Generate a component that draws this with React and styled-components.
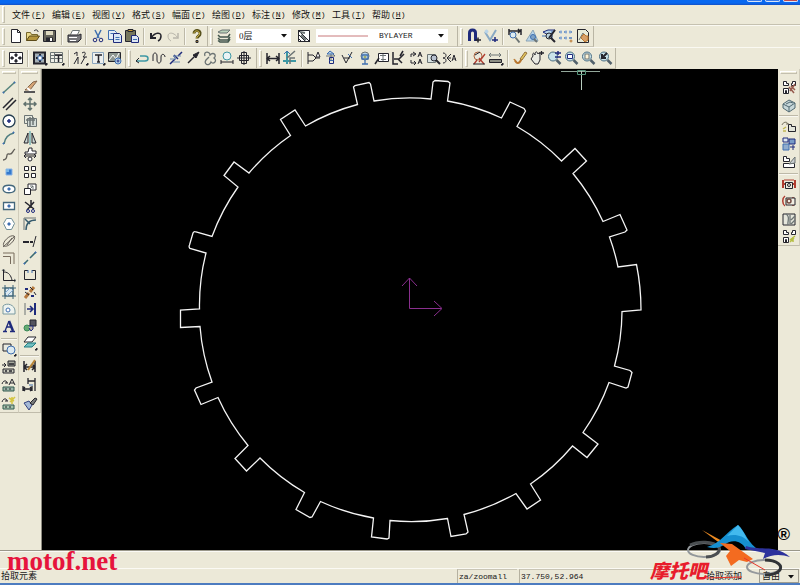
import React from "react";
import styled, { createGlobalStyle } from "styled-components";

const Global = createGlobalStyle`
  * { box-sizing: border-box; }
  body { margin: 0; background: #ece9d8; font-family: "Liberation Sans", "Noto Sans CJK SC", sans-serif; }
`;

const cjk = `"Noto Sans CJK SC", sans-serif`;
const mono = `"Liberation Mono", "Noto Sans CJK SC", monospace`;
const serif = `"Liberation Serif", "Noto Sans CJK SC", serif`;

/* Each icon is a list of [path, stroke, fill, stroke width] on a 16 x 16 grid. */
const K = "#25252d";
const G = "#6c7474";
const B = "#3f6fb0";
const N = "#1e2a7c";
const T = "#3e98a4";
const R = "#b03c30";
const Y = "#c79a35";
const O = "#b8762e";
const L = "#b9d5ea";
const W = "#ffffff";
const circle = (x, y, r) => `M${x - r} ${y}a${r} ${r} 0 1 0 ${2 * r} 0a${r} ${r} 0 1 0 ${-2 * r} 0`;
const box = (x, y, w, h) => `M${x} ${y}h${w}v${h}h${-w}z`;
const lens = [[circle(7, 6.5, 4.5), "#4a6c80", "#c9e3ea"], ["M10.5 10l4 4", "#52616c", "none", 2.5]];
const fourBoxes = [
  [box(2.5, 2.5, 4, 4), K, W], [box(9.5, 2.5, 4, 4), K, W],
  [box(2.5, 9.5, 4, 4), K, W], [box(9.5, 9.5, 4, 4), K, W],
];
const parts = [
  ["M2.5 6.5v-4h3v2h2v2zM10.5 6.5v-2h1v-2h3v4z", K, W],
  [box(2.5, 9.5, 5, 5), K, W], [box(4.5, 11.5, 1, 3), K],
];

const icons = {
  新建: [["M3.5 1.5h6l3 3v10h-9z", K, W], ["M9.5 1.5v3h3", K]],
  打开: [["M1.5 12.5v-8h4l1 2h6v2", "#77672b", "#ead98a"], ["M1.5 12.5l3-4.5h10l-3 4.5z", "#5b4a18", "#b5973e"], ["M9 3c2-2 4-1 4 1", K]],
  保存: [[box(1.5, 2.5, 12, 11), K, "#65645a"], [box(4, 3, 7, 4), "none", "#ded9c0"], [box(4, 9.5, 7, 4), "none", K], [box(8, 10, 2, 3), "none", W]],
  打印: [["M4.5 6.5l2-4h7l-2 4", G, W], ["M2 7h11l2-1v5l-3 3H2z", K, "#77777a"], ["M3 9.5h8M4 12.5h6", W]],
  剪切: [["M5 2l4 8M11 2L7 10", B, "none", 1.5], [circle(5, 12, 1.8) + circle(11, 12, 1.8), N]],
  复制: [["M1.5 2.5h6l2 2v7h-8z", B, "#e5edf5"], ["M6.5 5.5h6l2 2v7h-8z", N, "#dae6f4"], ["M8.5 9.5h4M8.5 11.5h4M3.5 5.5h3", B]],
  粘贴: [[box(1.5, 2.5, 10, 11), K, "#77775d"], [box(4, 1.5, 5, 2), K, Y], ["M7.5 7.5h5l2 2v5h-7z", N, "#dde6f2"], ["M9 11.5h4", B]],
  撤销: [["M3 5v5h5", K, "none", 2], ["M3.5 9.5C7 4 13 4 13 8c0 2-1 4-3 5", K, "none", 1.5]],
  重做: [["M13 5v5H8", "#b8b5aa", "none", 1.5], ["M12.5 9.5C9 4 3 4 3 8c0 2 1 4 3 5", "#b8b5aa"]],
  帮助: [["M5 5.5C5 1 12 2 11 6c0 2-3 2-3 4.5", "#57511c", "none", 3], ["M5 5.5C5 2 11 2 10.5 6c0 2-3 2-3 4.5", "#cdb54b"], [box(7, 12.5, 2, 2), K, Y]],
  图层: [["M2 4l4-2h8l-3 3H4z", G, "#b9d2b9"], ["M2 7l2 2h8l2-3M2 10l2 2h8l2-3M2 12.5l2 1.5h8l2-3", "#43564d", "none", 1.5]],
  线型: [[box(2.5, 2.5, 11, 11), K, W], ["M2 2l12 12M2 6l8 8M2 10l4 4", K], ["M4 4l5 1M5 7l5 5", G, "none", 2]],
  捕捉: [["M3.5 13V5c0-4 6-4 6 0v8", N, "none", 3], ["M9 12h6M12 9.5v5", K, "none", 1.5]],
  导航: [["M2 4l5 8 6-10", "#89a9c4", "none", 2], [circle(3.5, 3.5, 1.5), L, L], ["M9 12h6M12 9v5", N, "none", 1.5]],
  查距离: [["M2 1v6M2 3h11M14 1v6M11 1l2 2-2 2", K, "none", 1.5], [circle(6, 7, 3), B, "#dceaf0"], ["M8.5 9.5l4 5", G, "none", 2]],
  查角度: [["M2 13L9 2l5 11z", "#8ba4b6", L], [circle(9, 9, 2.5), B, "#7fa3c6"], ["M10 11l3 3", G, "none", 2]],
  查元素: [["M2 4l5-2h7l-5 6z", N, L], ["M1 8h6M11 3v8", B], [circle(8, 8, 3), K, "#bcd3df"], ["M10 10l4 4M14 2l-6 8", K, "none", 2]],
  查坐标: [["M1 4h3M6 4h3M11 4h3M1 10h3M6 10h3M11 10h3", "#7598c4", "none", 2], ["M3 2v4M8 2v4M12 2v4M3 8v4M8 8v4", "#9fb9dc"], [circle(13, 13, 1), O]],
  查图: [["M2.5 1.5h8l3 3v10h-11z", K, "#e9ecd9"], ["M4 12l4-7 3 7", G], ["M7 8l2-2 2 2h2v4l-3 2-4-4z", O, "#d8a069"]],

  全图: [[box(1.5, 2.5, 13, 11), K, W], ["M8 4v3M6.5 5.5L8 4l1.5 1.5M8 12V9M6.5 10.5L8 12l1.5-1.5M3 8h3M4.5 6.5L3 8l1.5 1.5M13 8h-3M11.5 6.5L13 8l-1.5 1.5", K, "none", 1.5]],
  图框: [[box(2, 2.5, 11, 11), K, "#a4aeb4", 2], ["M8 4v2M8 10v2M4 8h2M10 8h2", K, "none", 2], [box(6, 6, 4, 4), B, W], ["M13 15h2v-2z", K, K]],
  标题: [[box(1.5, 2.5, 12, 10), G, "#f0f0e8"], ["M2 5.5h12M2 8.5h12M5.5 3v10", G], ["M6 5h7M9.5 5v7", K, "none", 1.5], ["M13 15h2v-2z", K, K]],
  标号: [["M1 4l3-2v4M9 3c3-2 5 0 1 4h4M1 14l4-7v7M8 14l4-7", K], ["M13 15h2v-2z", K, K]],
  文本框: [[box(2.5, 2.5, 11, 11), "#8ba6bf", "#edf0ef"], ["M5 5h7M8.5 5v7M7 12h3", K, "none", 1.5], ["M13 15h2v-2z", K, K]],
  图库: [[box(1.5, 2.5, 12, 9), K, "#8d9690"], ["M2 10l4-5 3 4 3-6", W], [circle(11, 11, 3), B, L], [circle(11, 11, 1), N]],
  箭尾: [["M2 11h9c4 0 4-5 0-5H6", T, "none", 1.5], ["M5 8L2 11l3 2", K]],
  波浪: [["M2 11V6c0-4 4-4 4 0v4c0 4 4 4 4 0V7c0-4 4-3 4 0", K]],
  双折: [["M2 14l5-5M6 5l4 4M10 6l4-4", N, "none", 1.5], ["M2 9h6l-3-3h8M5 12h7", "#6f8daf"]],
  箭头: [["M3 13l8-8", K, "none", 1.5], ["M8 5l6-3-3 6z", K, K]],
  云线: [["M3 6c-2-5 5-5 5-1 4-4 7 1 4 3 4 3-1 7-3 4-2 5-8 2-5-2l3-3", G, "none", 1.3]],
  孔轴: [[circle(8, 6, 4), T, "#eaf3f5"], ["M2 10v4M14 10v4M2 12h12", K]],
  齿轮: [[box(3.5, 5.5, 9, 5), K], ["M1 8h14M8 1v14", K], [box(5.5, 2.5, 5, 11), K]],
  尺寸: [["M2 3v11M14 3v11M2 8.5h12M5 6L2 8.5l3 2.5M11 6l3 2.5-3 2.5", K, "none", 1.5]],
  坐标: [["M5 1v13M1 11h13", T, "none", 2], ["M5 8l8-7M8 14V8h5", G, "none", 1.5], ["M2 4l3-3 3 3", B]],
  半径: [["M2 2v12M2 5h5l3 3-3 3H2M10 8h4", K], ["M10 7l2-5 2 5z", K, W]],
  倒角: [["M3 6h9L8 2v9", G], [box(6.5, 7.5, 4, 6), N], ["M6.5 10.5h4M4 4l3-3 4 3z", B, L]],
  粗糙度: [["M2 5l4 8 6-11M4 8h6", K], ["M8 4l4 4", B]],
  公差: [[circle(8, 6, 4), G, L], ["M5 5h6v4H5zM8 10v4M5 14h6", B, "none", 1.3], [circle(8, 7, 1), "#9eac63", "#9eac63"]],
  引出: [["M4.5 3.5h10v8h-10z", K, W], ["M6 5.5h6M7 9.5h5M9 4v7", G], ["M1 14l4-6", K, "none", 1.5]],
  基准: [["M2 2v12h5M3 9h5l5-5M12 1l-3 5M7 9l4 4", K, "none", 1.5]],
  焊接: [["M3 7V4h4M5 2l3 2-3 2M3 10v3h4M6 11l2 2-2 2", K], ["M10 7l2-5 2 5M11 5h2M10 14l2-5 2 5M11 12h2", K]],
  剖切: [[box(2.5, 4.5, 8, 8), G, "#dbe5e4"], [circle(9, 8, 3), K, "#b8c2d0"], ["M11 10l4 4", K, "none", 2]],
  局部: [["M1 3c4 0 4 5 0 5 4 0 4 5 0 5M5 8h4M9 4L5 8l4 4", K], ["M10 11l2-6 2 6M11 9h3", K]],
  编辑查: [[circle(7, 6, 4), "#ab6640", "#e9e9dc"], ["M3 14l3-4M8 8l5 6M8 12l6-8", R, "none", 1.3], ["M4 5l5-3M2 14h12", K]],
  测量: [["M2 5h10M3 3L1 5l2 2M11 3l2 2-2 2", G], [box(1.5, 9.5, 12, 3), K, "#8c8e84"], ["M13 15h2v-2z", K, K]],
  重画: [["M2 10c1-1 2 4 4 3 2 0 3-3 4-5", O, "none", 2], ["M8 9l5-7 2 1-5 7z", "#94713b", "#e0c45a"]],
  平移: [["M4 6c-1-3 1-4 2-1 0-4 2-4 3-1 1-2 2-1 2 2v4l-2 4H6L2 9z", K, "#e9eae2"], ["M10 3h5M12.5 1v4", K, "none", 1.3]],
  缩放: [...lens, ["M9 3h6M12 1v4M9 7h6", N, "none", 1.5]],
  窗口: [...lens, [box(4.5, 4.5, 5, 4), N, W]],
  全部: [...lens, [box(5, 4, 4, 5), G, "#fff4d6"]],
  回溯: [...lens, ["M10 3L5 8M5 4v4h4", K, "none", 2]],

  直线: [["M2 14L14 3", "#55837c", "none", 1.5], ["M2 14l1-1M13 4l1-1", B, "none", 2]],
  平行线: [["M2 12L12 2M5 14L15 4", K, "none", 1.5]],
  圆: [[circle(8, 8, 6), "#263f52", W, 1.3], ["M6 8h4M8 6v4", N, "none", 1.5]],
  圆弧: [["M3 14C4 7 8 4 13 3", "#4e7d80", "none", 1.5], [box(2, 13, 1, 1), B, B], [box(12, 2, 1, 1), B, B]],
  样条: [["M2 13c6 0 2-7 6-6s3-3 6-5", "#625f59", "none", 1.3]],
  点: [[box(5, 5, 6, 6), "#8ab4e8", "#3479cc"], [box(5, 5, 3, 3), "none", "#7ab5e7"]],
  椭圆: [["M2 8c0-5 12-5 12 0s-12 5-12 0", "#43677c", W, 1.3], [box(7, 7, 2, 2), B, B]],
  矩形: [[box(2.5, 4.5, 11, 7), "#43677c", W, 1.3], [box(7, 7, 2, 2), B, B]],
  多边形: [["M5.5 2.5h5l3 5-3 6h-5l-3-6z", "#6f8e98", W], [box(7, 7, 2, 2), B, B]],
  公式: [["M3 13C0 10 9 1 13 3c3 3-6 12-10 10zM2 14L14 3M6 12l5-7", "#655f58"]],
  折线: [["M2 3h11v11M2 6.5h7.5V14", "#786c5d"]],
  曲线: [["M2.5 2v11.5H15M3 5c5 0 7 4 8 8", K], ["M1 4l1.5-2L4 4M13 12l2 1.5-2 1.5", G]],
  剖面: [[box(4, 4, 8, 8), "#3c6377", "#dbe8ee"], ["M1 4h14M1 12h14M4 1v14M12 1v14", "#3c6377"], ["M4 9l5-5M6 12l6-6", "#7fa6cf"]],
  填充: [["M2 13V5c4-4 12-1 12 5v3z", "#7a9aa0", "#eef3ef"], [circle(7, 9, 2), B, W]],
  文字: [["M4 13L8 3M6 9h5M2 13.5h4M9 13.5h5", N, "none", 1.3], ["M8 3l4 10", N, "none", 2.5]],
  块: [[box(2, 3, 8, 7), K, "#e8eadf"], [circle(10, 9, 4), B, "#ddeaf0"], ["M13 15h2v-2z", K, K]],
  块编辑: [["M1 6h4M3 4l2 2-2 2", K], [box(7, 2, 7, 5), K, "#a6a99e"], [box(2, 10, 11, 4), K, "#c8c9bb"], ["M8 5h5M4 12h2M8 12h3", K, "none", 1.5]],
  属性: [["M1 7c1-4 5-4 5-1M4 6h3M8 8l3-6 3 6M9 6h4", K], [box(2, 10, 11, 4), "#31594f", "#9bb5a9"], ["M4 12h2M8 12h2", K]],
  插入: [["M1 7c1-4 5-4 5-1M4 6h3", K], ["M8 3l5 3M9 7l5-5M11 2v7", "#d5c541", "none", 1.5], [box(2, 10, 11, 4), "#31594f", "#a6c3ad"], ["M4 12h2M8 12h2", K]],
  擦除: [["M3 11l8-8 4-1-7 9z", "#83674d", "#d6a575"], ["M5 9l4 3", W, "none", 2], ["M2 13h11", K, "none", 1.5]],
  移动: [["M8 2v12M2 8h12M6 4l2-2 2 2M6 12l2 2 2-2M4 6L2 8l2 2M12 6l2 2-2 2", "#60716d", "none", 1.5]],
  阵移: [[box(2.5, 2.5, 8, 8), G, "#e6e8dd"], [box(5.5, 5.5, 9, 8), G, "#d4dcd8"], ["M4 7h9M8 4v9M11 4v8", G, "none", 1.5]],
  镜像: [["M6 3v10H2zM10 3v10h4z", K, "#cbd6d3"], ["M8 1v14", T]],
  旋转: [["M7 1h3v3h4v3H3V5h3z", K, W], ["M3 9h10M4 7L2 9l2 2M12 7l2 2-2 2", K], [circle(8, 12, 2), K, W]],
  阵列: fourBoxes,
  比例: [["M6 8V3h8v6H9", K, W], [box(2.5, 7.5, 6, 6), K, W], ["M8 8l3-3M8 5h3v3", G]],
  裁剪: [["M9 2v8M3 4l9 7M12 4l-7 8", K, "none", 1.5], [circle(6, 13, 1.5) + circle(11, 13, 1.5), N]],
  圆角: [["M2 2v12M2 2h12", G], ["M4 14C4 7 7 4 14 4M3 3l5 5", "#365b6d", "none", 1.5]],
  延伸: [["M1 9h6M8 9h3", K, "none", 2], ["M11 14l3-11", K]],
  打断: [["M2 14l4-4M8 8l6-6", "#3a6a71", "none", 1.5], [box(2, 13, 1, 1), B, B], [box(13, 2, 1, 1), B, B]],
  拉伸: [["M6 3.5H2.5v9h11v-9H10", K], ["M6 3v3M10 3v3", B]],
  打散: [["M3 14l4-5M8 8l4-5", "#b5793f", "none", 3], ["M8 3l3 3M3 8l4 3M12 8l2 3", K], ["M3 5h3M9 12h3", N, "none", 2]],
  对齐: [["M3 2v12", G], ["M13 2v12", N, "none", 2], ["M5 8h6M8 5l3 3-3 3", N, "none", 1.5]],
  格式刷: [[circle(5, 10, 3), "#3a8958", "#65ab73"], [box(8, 2, 6, 6), K, "#53545f"], ["M7 8h4v3l-2 2-2-3", N, "#bbb2a2"]],
  层叠: [["M2 7l4-5h8l-4 5z", K, W], ["M2 12l4-4h8l-4 4z", "#207f84", "#72bfc0"], ["M13 15h2v-2z", K, K]],
  尺寸改: [["M2 3v11M13 3v11M2 9h11M5 6L2 9l3 3M10 6l3 3-3 3", K, "none", 1.5], ["M6 12l7-10", "#b78438", "none", 2]],
  尺寸驱动: [["M6 1v6M13 1v6M6 4h7M1 9v5M10 9v5M1 12h9M3 10l-2 2 2 2M8 10l2 2-2 2M13 7v7", K, "none", 1.3], ["M7 8h4", B]],
  特性: [["M2 7l5-2 3 4-3 5z", "#33427e", "#a5b9d6"], ["M8 7l5-5 2 1-4 6z", K, "#77797a"]],

  提取图符: [...parts, ["M8 8l5 6M10 7l4 4M9 12l5-7", "#965a4d", "none", 1.5]],
  三维: [["M2 7l6-4 6 3v5l-6 4-6-4z", "#4f6871", "#c7d7d9"], ["M2 7l6 3 6-4M8 10v5M5 7l4-2 3 1", "#4f6871"]],
  定义图符: [["M1 7c1-3 5-4 6-1M5 6h3", "#76715f"], ["M7.5 13.5v-7h3v2h4v5z", K, "#e3e5db"], ["M2 11l3-2M2 13h3", "#c1b653", "none", 1.5]],
  图库管理: [[box(2, 2, 5, 4), N, "#dce7f1"], [box(8, 3, 6, 5), N, "#789ac7"], [box(2, 8, 6, 6), B, "#90accd"], ["M9 11h5M12 9v5", N]],
  驱动: [["M2.5 7.5v-5h3v2h3v3z", K, W], [box(2.5, 9.5, 11, 4), K, W], ["M8 10l6-7v6z", G, "#c9ced0"]],
  构件: [["M2 4v8M14 4v8M3 8h2M11 8h2", R, "none", 2], [box(4.5, 6.5, 7, 6), K, "#efecde"], ["M3 4h10", R], [circle(8, 9, 1.5), K]],
  转换图: [["M4 3C1 5 1 11 4 13M12 4v9", R, "none", 1.5], [box(5, 5, 9, 7), K, "#f1eee3"], [circle(8, 8, 2), "#734b42", "none", 1.5]],
  技术: [[box(2, 3, 12, 11), K, "#e5e6dc"], ["M5 3c5 3 1 7 2 11M9 4v9M10 9l4-4M10 13l4-4", G, "none", 1.3]],
  块查询: [...parts, ["M9 12l5-4M12 9v5M9 14l4-4", "#b5be43", "none", 1.5]],
};

function Icon({ name }) {
  return (
    <svg width="16" height="16" viewBox="0 0 16 16" aria-hidden="true">
      {icons[name].map(([d, stroke, fill = "none", width = 1], i) => (
        <path key={i} d={d} stroke={stroke} fill={fill} strokeWidth={width} />
      ))}
    </svg>
  );
}

const Window = styled.div`
  position: relative;
  display: flex;
  flex-direction: column;
  height: 100vh;
  min-height: 440px;
  overflow: hidden;
  background: #ece9d8;
`;
const TitleBar = styled.header`
  display: flex;
  justify-content: flex-end;
  gap: 3px;
  flex: 0 0 5px;
  padding-right: 2px;
  background: linear-gradient(#0868f0 60%, #1550c4);
`;
const CaptionButton = styled.button`
  width: 15px;
  height: 2px;
  padding: 0;
  border: 1px solid #d8e4f8;
  border-top: 0;
  border-radius: 0 0 3px 3px;
  background: ${(p) => (p.$close ? "#c24a4c" : "#3b7be8")};
`;
const MenuBar = styled.nav`
  display: flex;
  align-items: center;
  flex: 0 0 20px;
  border-bottom: 1px solid #c5c1b0;
`;
const MenuItem = styled.button`
  display: flex;
  align-items: center;
  gap: 1px;
  width: 40px;
  padding: 0 0 0 5px;
  border: 0;
  background: none;
  color: #111;
  font: 9px/14px ${cjk};
  white-space: nowrap;
`;
const Accel = styled.span`
  font: 8px/14px ${mono};
`;
const ToolRow = styled.div`
  display: flex;
  flex: 0 0 22px;
  border-top: 1px solid #faf9f2;
`;
const Band = styled.div`
  display: flex;
  align-items: center;
  padding-right: ${(p) => p.$end || 2}px;
  border-right: 1px solid #b9b5a4;
  border-bottom: 1px solid #c9c5b5;
`;
const Grip = styled.span`
  flex: none;
  width: ${(p) => (p.$tall ? "auto" : "3px")};
  height: ${(p) => (p.$tall ? "3px" : "17px")};
  margin: ${(p) => (p.$tall ? "2px 2px 4px" : "0 2px")};
  border: 1px solid #c3bfae;
  border-top-color: #fff;
  border-left-color: #fff;
`;
const Separator = styled.span`
  flex: none;
  width: ${(p) => (p.$flat ? "auto" : "2px")};
  height: ${(p) => (p.$flat ? "2px" : "17px")};
  margin: ${(p) => (p.$flat ? "0 1px" : "0 2px 0 3px")};
  border-left: ${(p) => (p.$flat ? "0" : "1px solid #bdb9a8")};
  border-top: ${(p) => (p.$flat ? "1px solid #bdb9a8" : "0")};
  background: #f9f8f1;
`;
const ToolButton = styled.button`
  display: grid;
  place-items: center;
  flex: none;
  width: 17px;
  height: 17px;
  padding: 0;
  border: 0;
  background: none;
  &:hover { background: #dcd8c6; }
`;
const Combo = styled.label`
  position: relative;
  display: flex;
  align-items: center;
  width: ${(p) => p.$width}px;
  height: 14px;
  margin: 0 4px;
  background: #fff;
`;
const Select = styled.select`
  appearance: none;
  width: 100%;
  height: 14px;
  padding: 0 12px 0 ${(p) => p.$indent}px;
  border: 0;
  background: none;
  color: #1a1a1a;
  font: ${(p) => p.$size || 9}px/14px ${(p) => (p.$mono ? mono : serif)};
`;
const Arrow = styled.svg`
  position: absolute;
  right: 4px;
  top: 5px;
  pointer-events: none;
`;
const Stroke = styled.svg`
  position: absolute;
  left: 2px;
  top: 6px;
  pointer-events: none;
`;
const Workspace = styled.main`
  display: grid;
  grid-template-columns: 42px minmax(0, 1fr) 22px;
  flex: 1;
  min-height: 0;
`;
const Palettes = styled.aside`
  display: grid;
  grid-template-columns: 19px 22px;
  align-items: start;
  border-right: 1px solid #8d8b80;
`;
const Palette = styled.div`
  display: flex;
  flex-direction: column;
  border-right: 1px solid #d0ccbb;
  border-bottom: 1px solid #c0bcab;
`;
const SidePalette = styled.aside`
  display: grid;
  align-content: start;
`;
const Group = styled.div`
  display: flex;
  flex-direction: column;
  align-items: center;
  justify-content: space-between;
  height: ${(p) => p.$height}px;
  margin-bottom: ${(p) => p.$gap || 0}px;
`;
const Canvas = styled.section`
  min-width: 0;
  min-height: 0;
  background: #000;
`;
const Drawing = styled.svg`
  display: block;
  width: 100%;
  height: 100%;
`;
const CommandBar = styled.div`
  position: relative;
  z-index: 1;
  display: flex;
  align-items: center;
  flex: 0 0 18px;
  padding: 4px 0 0 7px;
  border-top: 1px solid #9a978a;
  box-shadow: inset 0 1px #fbfaf5;
`;
const SiteName = styled.a`
  color: #e6143c;
  font: bold 27px/13px ${serif};
  text-decoration: none;
`;
const StatusBar = styled.footer`
  display: flex;
  align-items: stretch;
  flex: 0 0 17px;
  border-top: 1px solid #fbfaf4;
  border-bottom: 2px solid #4d7cc0;
  color: #181818;
  font: 9px/14px ${cjk};
`;
const Hint = styled.span`
  flex: 1;
  padding-left: 1px;
`;
const StatusCell = styled.span`
  width: ${(p) => p.$width}px;
  margin-right: 2px;
  padding-left: 1px;
  border-left: 1px solid #b5b1a0;
  border-top: 1px solid #c9c5b5;
  font: 8px/13px ${mono};
`;
const Mode = styled.span`
  width: 54px;
  padding-left: 1px;
`;
const SnapCombo = styled(Combo)`
  height: 14px;
  margin: 0 1px 0 0;
  border: 1px solid #a09d90;
  background: #ece9d8;
`;
const Brand = styled.div`
  position: absolute;
  z-index: 2;
  right: 0;
  bottom: 2px;
  width: 152px;
  height: 62px;
  pointer-events: none;
`;
const BrandArt = styled.svg`
  position: absolute;
  inset: 0;
`;
const BrandName = styled.span`
  position: absolute;
  left: 2px;
  bottom: 1px;
  color: #e81c2c;
  font: italic 900 19px/24px ${cjk};
`;
const Registered = styled.span`
  position: absolute;
  right: 10px;
  top: 5px;
  font: bold 17px/18px "Liberation Sans", sans-serif;
`;

const menus = [
  ["文件", "F"], ["编辑", "E"], ["视图", "V"], ["格式", "S"], ["幅面", "P"],
  ["绘图", "D"], ["标注", "N"], ["修改", "M"], ["工具", "T"], ["帮助", "H"],
];

/* "|" stands for a separator between groups of tools. */
function Tools({ names }) {
  return names.split(" ").map((name, i) =>
    name === "|" ? <Separator key={i} /> : (
      <ToolButton key={i} aria-label={name}><Icon name={name} /></ToolButton>
    )
  );
}

function Column({ groups }) {
  return (
    <Palette>
      <Grip $tall />
      {groups.map(([height, names, gap], i) => (
        <React.Fragment key={i}>
          {i > 0 && <Separator $flat />}
          <Group $height={height} $gap={gap}><Tools names={names} /></Group>
        </React.Fragment>
      ))}
    </Palette>
  );
}

function Dropdown({ as: Shell = Combo, label, value, width, indent, size, monospaced, children }) {
  return (
    <Shell $width={width}>
      {children}
      <Select aria-label={label} defaultValue={value} $indent={indent} $size={size} $mono={monospaced}>
        <option>{value}</option>
      </Select>
      <Arrow width="6" height="4" viewBox="0 0 6 4"><path d="M0 0h6L3 3.5z" fill="#111" /></Arrow>
    </Shell>
  );
}

/* Each entry: where the rim arc ends, followed by the corners of a tooth. */
const teeth = [
  "206 253 L190 248.5 Q188.5 247 189.5 245 L193 233 Q194 231 196 232 L212 236.5",
  "238 187 L224 175.5 L234 162 L249 173",
  "290.5 135.5 L280.5 119.5 L295 110 L305.5 126",
  "357.5 104.5 L353.5 87 L355 85.5 L369 82.5 L370.5 84 L374 101",
  "431 99 L433 82 L435 80.5 L448 81.5 L450 83 L447.5 101",
  "501.5 118 L510 102 L524 108.5 L525.5 111 L517 126.5",
  "561.5 161 L575 148.5 L586.5 161 L573 173.5",
  "603 221.5 L620 214.5 L627 230 L625 232 L609.5 237",
  "618 267 L636.5 264.5 A231 231 0 0 1 641 310 L622 311.5",
  "614.5 366 L630 370.5 L632 372.5 L628 387 L626 388 L609 382.5",
  "583 432.5 L598 444 L587 457.5 L572.5 446",
  "530.5 484 L540.5 500 L527 509 L516 493.5",
  "464 514.5 L468 532 L466 534 L451 536.5 L447.5 518.5",
  "390 520.5 L389 538 L387 539 L371.5 537 L373.5 518",
  "320.5 501.5 L312 517 L310 517.5 L296 509.5 L304.5 492.5",
  "260 458 L246.5 471 L235 458.5 L248 445.5",
  "218 397.5 L201 404.5 L194.5 390 L196 388 L212 382",
];
const gear =
  "M180.5 327.5 V310 L199.5 309 " +
  teeth.map((t) => `A211 211 0 0 1 ${t}`).join(" ") +
  " A211 211 0 0 1 200 326.5 Z";

export default function App() {
  return (
    <Window>
      <Global />
      <TitleBar>
        <CaptionButton aria-label="最小化" />
        <CaptionButton aria-label="还原" />
        <CaptionButton $close aria-label="关闭" />
      </TitleBar>
      <MenuBar>
        <Grip />
        {menus.map(([name, key]) => (
          <MenuItem key={name}>{name}<Accel>(<u>{key}</u>)</Accel></MenuItem>
        ))}
      </MenuBar>
      <ToolRow>
        <Band>
          <Grip />
          <Tools names="新建 打开 保存 | 打印 | 剪切 复制 粘贴 | 撤销 重做 | 帮助" />
        </Band>
        <Band $end={5}>
          <Grip />
          <Tools names="图层" />
          <Dropdown label="图层" value="0层" width={55} indent={3} />
          <Tools names="线型" />
          <Dropdown label="线型" value="BYLAYER" width={132} indent={63} size={8} monospaced>
            <Stroke width="50" height="2"><path d="M0 1h50" stroke="#c8787a" /></Stroke>
          </Dropdown>
        </Band>
        <Band>
          <Grip />
          <Tools names="捕捉 导航 | 查距离 查角度 查元素 查坐标 查图" />
        </Band>
      </ToolRow>
      <ToolRow>
        <Band>
          <Grip />
          <Tools names="全图 | 图框 标题 | 标号 文本框 图库" />
        </Band>
        <Band $end={4}>
          <Grip />
          <Tools names="箭尾 波浪 双折 箭头 云线 孔轴 齿轮" />
        </Band>
        <Band $end={4}>
          <Grip />
          <Tools names="尺寸 坐标 | 半径 倒角 粗糙度 公差 引出 基准 焊接 剖切 局部" />
        </Band>
        <Band>
          <Grip />
          <Tools names="编辑查 测量 | 重画 平移 缩放 窗口 全部 回溯" />
        </Band>
      </ToolRow>
      <Workspace>
        <Palettes>
          <Column groups={[
            [257, "直线 平行线 圆 圆弧 样条 点 椭圆 矩形 多边形 公式 折线 曲线 剖面 填充 文字", 3],
            [72, "块 块编辑 属性 插入"],
          ]} />
          <Column groups={[
            [274, "擦除 移动 阵移 镜像 旋转 阵列 比例 裁剪 圆角 延伸 打断 拉伸 打散 对齐 格式刷 层叠", 3],
            [55, "尺寸改 尺寸驱动 特性"],
          ]} />
        </Palettes>
        <Canvas aria-label="绘图区">
          <Drawing viewBox="42 69 736 481">
            <path d={gear} fill="none" stroke="#f4f4f4" strokeWidth="1.3" />
            <path d="M409.5 278v30.5h32M402 286l7.5-8 7.5 8M434 301l8 7.5-8 7.5" fill="none" stroke="#8a2f8e" />
            <path d="M561 71.5h39" stroke="#93a79a" />
            <path d="M581.5 70v20" stroke="#b9cdbf" />
            <path d="M577.5 70.5h8v4h-8z" fill="none" stroke="#57957b" />
          </Drawing>
        </Canvas>
        <SidePalette>
          <Column groups={[
            [35, "提取图符 三维", 2],
            [53, "定义图符 图库管理 驱动", 3],
            [70, "构件 转换图 技术 块查询"],
          ]} />
        </SidePalette>
      </Workspace>
      <CommandBar><SiteName href="#">motof.net</SiteName></CommandBar>
      <StatusBar>
        <Hint>拾取元素</Hint>
        <StatusCell $width={60}>za/zoomall</StatusCell>
        <StatusCell $width={184}>37.750,52.964</StatusCell>
        <Mode>拾取添加</Mode>
        <Dropdown as={SnapCombo} label="捕捉方式" value="自由" width={40} indent={2} />
      </StatusBar>
      <Brand>
        <BrandArt width="152" height="62" viewBox="648 521 152 62" aria-hidden="true">
          <ellipse cx="704" cy="550" rx="16" ry="7" fill="none" stroke="#92979a" strokeWidth="2" />
          <path d="M690 545c8-4 23-4 29 2 2 6-6 10-13 10" fill="none" stroke="#4b4f52" strokeWidth="3" />
          <ellipse cx="764" cy="567" rx="17" ry="7" fill="none" stroke="#95999c" strokeWidth="2" />
          <path d="M765 560c12 0 19 6 14 11-3 3-8 4-14 4" fill="none" stroke="#303336" strokeWidth="3" />
          <path d="M702 530l22 12-3 2z" fill="#ec8a21" />
          <path d="M707 547c14-4 18-14 31-22 8 7 9 18 22 26l-14-2c-5-9-15-10-22-4-5 3-10 4-17 2z" fill="#168fd0" />
          <path d="M727 536l11-11c6 6 8 13 11 17-7-7-14-8-22-6z" fill="#42b9ee" />
          <path d="M746 546c14 5 29-2 44 11-9-3-18-3-27 2l2-6-20-4z" fill="#2d329c" />
          <path d="M720 543l12 1 21 15-6 3-8-2-8 6-5-10 4-5z" fill="#f36b20" />
          <path d="M744 558l21 12M706 578l36-1" stroke="#e8362a" fill="none" />
        </BrandArt>
        <BrandName>摩托吧</BrandName>
        <Registered>®</Registered>
      </Brand>
    </Window>
  );
}
